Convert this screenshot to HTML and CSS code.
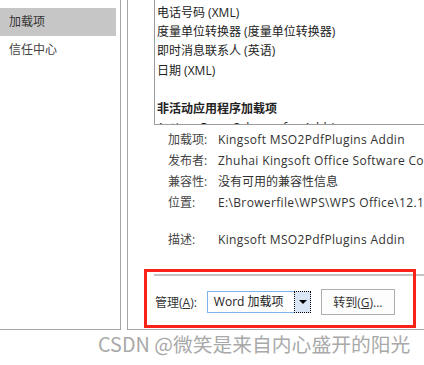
FILE: index.html
```html
<!DOCTYPE html>
<html lang="zh-CN">
<head>
  <meta charset="UTF-8" />
  <title>加载项</title>
  <link rel="stylesheet" href="styles.css">
</head>
<body>
  <div class="window">
    <div class="main">
      <ul class="nav">
        <li class="nav-item active">加载项</li>
        <li class="nav-item">信任中心</li>
      </ul>

      <div class="panel">
        <ul class="listbox">
          <li>电话号码 (XML)</li>
          <li>度量单位转换器 (度量单位转换器)</li>
          <li>即时消息联系人 (英语)</li>
          <li>日期 (XML)</li>
          <li class="blank"></li>
          <li class="group">非活动应用程序加载项</li>
          <li class="en">ActionsPane Schema for Add-Ins</li>
        </ul>

        <div class="details">
          <div class="row"><span class="label">加载项:</span><span class="value en">Kingsoft MSO2PdfPlugins Addin</span></div>
          <div class="row"><span class="label">发布者:</span><span class="value en">Zhuhai Kingsoft Office Software Co., Ltd.</span></div>
          <div class="row"><span class="label">兼容性:</span><span class="value">没有可用的兼容性信息</span></div>
          <div class="row"><span class="label">位置:</span><span class="value en">E:\Browerfile\WPS\WPS Office\12.1.0.16417\office6\addins</span></div>
          <div class="row desc"><span class="label">描述:</span><span class="value en">Kingsoft MSO2PdfPlugins Addin</span></div>
        </div>

        <div class="separator"></div>

        <div class="manage">
          <span class="manage-label">管理(<u>A</u>):</span>
          <div class="select">
            <span class="select-text">Word 加载项</span>
            <span class="select-arrow"></span>
          </div>
          <button class="go-btn">转到(<u>G</u>)...</button>
        </div>
      </div>
    </div>

    <div class="watermark">CSDN @微笑是来自内心盛开的阳光</div>

    <div class="highlight"></div>
  </div>
</body>
</html>
```

FILE: styles.css
```css
* {
  margin: 0;
  padding: 0;
  box-sizing: border-box;
}

html, body {
  width: 100%;
  height: 100%;
  overflow: hidden;
  background: #ffffff;
  font-family: "Segoe UI", "Open Sans", "Noto Sans CJK SC", sans-serif;
  font-size: 12px;
  color: #333333;
}

.window {
  position: relative;
  width: 424px;
  height: 365px;
  overflow: hidden;
}

.main {
  display: flex;
  height: 330px;
  gap: 6px;
}

/* left navigation */
.nav {
  list-style: none;
  flex: 0 0 121px;
  height: 330px;
  padding: 8px 4px 0 0;
  border-right: 1px solid #a6a6a6;
  border-bottom: 1px solid #a6a6a6;
}

.nav-item {
  height: 28px;
  line-height: 28px;
  padding-left: 9px;
  color: #444444;
  white-space: nowrap;
}

.nav-item.active {
  background: #c6c6c6;
  color: #333333;
}

/* right panel */
.panel {
  flex: 0 0 360px;
  height: 330px;
  border-left: 1px solid #a6a6a6;
  border-bottom: 1px solid #a6a6a6;
}

.en {
  letter-spacing: 0.35px;
}

.listbox {
  list-style: none;
  height: 126px;
  margin: -1px 0 0 26px;
  padding: 3px 0 0 2px;
  border: 1px solid #9c9c9c;
  overflow: hidden;
  color: #222222;
}

.listbox li {
  height: 19.2px;
  line-height: 19.2px;
  white-space: nowrap;
}

.listbox .group {
  font-weight: bold;
}

.details {
  margin-top: 4px;
  padding-left: 40px;
}

.row {
  display: flex;
  height: 21px;
  line-height: 21px;
  white-space: nowrap;
}

.row.desc {
  margin-top: 16px;
}

.label {
  width: 50px;
  flex-shrink: 0;
  color: #444444;
}

.separator {
  height: 2px;
  margin: 24px 0 0 26px;
  background: #c4c4c4;
}

.manage {
  display: flex;
  align-items: center;
  margin-top: 13px;
  padding-left: 27px;
}

.manage-label {
  margin-right: 10px;
}

.select {
  display: flex;
  align-items: stretch;
  flex-shrink: 0;
  width: 104px;
  height: 22px;
  border: 1px solid #7eb4ea;
  background: #ffffff;
}

.select-text {
  flex: 1;
  line-height: 20px;
  padding-left: 6px;
  color: #222222;
  white-space: nowrap;
}

.select-arrow {
  position: relative;
  width: 17px;
  margin: -1px -1px -1px 0;
  background: #dae6f5;
  border: 1px dotted #000000;
}

.select-arrow::after {
  content: "";
  position: absolute;
  left: 4px;
  top: 8px;
  border-left: 4px solid transparent;
  border-right: 4px solid transparent;
  border-top: 4px solid #000000;
}

.go-btn {
  flex-shrink: 0;
  width: 74px;
  height: 26px;
  margin-left: 10px;
  border: 1px solid #adadad;
  background: #fdfdfd;
  font: inherit;
  color: #333333;
}

.watermark {
  height: 35px;
  line-height: 28px;
  padding-left: 98px;
  font-family: "Noto Sans CJK SC", sans-serif;
  font-size: 19.8px;
  color: #a9a9a9;
  white-space: nowrap;
}

/* annotation frame drawn over the manage row */
.highlight {
  position: absolute;
  left: 144px;
  top: 269px;
  width: 272px;
  height: 59px;
  border: 3px solid #fa2218;
}
```
